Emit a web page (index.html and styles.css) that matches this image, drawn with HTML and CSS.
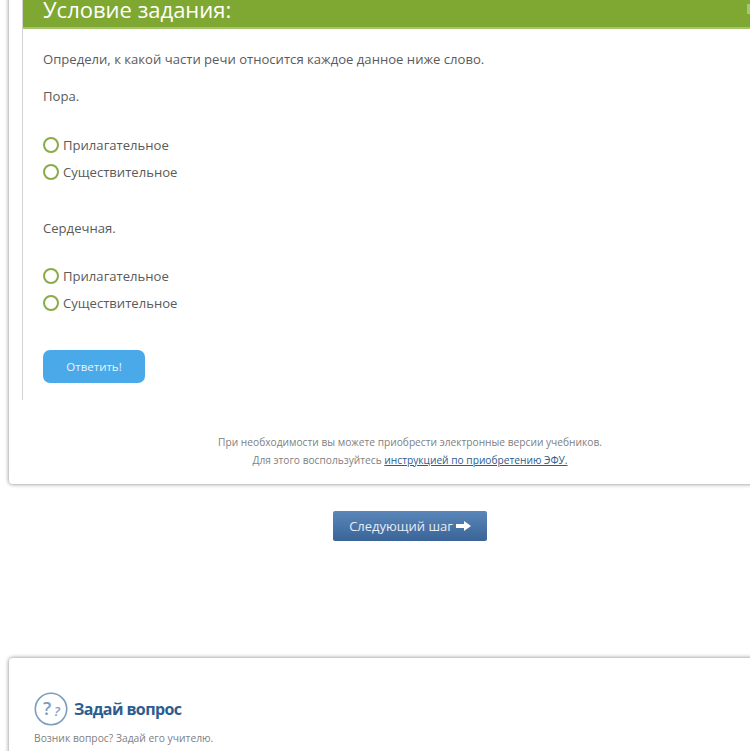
FILE: index.html
```html
<!DOCTYPE html>
<html lang="ru">
	<head>
		<meta charset="utf-8" />
		<title>Условие задания</title>
		<link rel="stylesheet" href="styles.css">
	</head>
	<body>
		<div class="page">
			<section class="card lesson">
				<div class="task">
					<h2 class="task-title">Условие задания:<span class="title-mark"></span></h2>
					<div class="task-body">
						<p class="line first">Определи, к какой части речи относится каждое данное ниже слово.</p>
						<p class="line">Пора.</p>
						<ul class="options">
							<li class="option"><span class="radio"></span>Прилагательное</li>
							<li class="option"><span class="radio"></span>Существительное</li>
						</ul>
						<p class="line">Сердечная.</p>
						<ul class="options last">
							<li class="option"><span class="radio"></span>Прилагательное</li>
							<li class="option"><span class="radio"></span>Существительное</li>
						</ul>
						<a class="answer" href="#">Ответить!</a>
					</div>
				</div>
				<div class="note">
					<p>При необходимости вы можете приобрести электронные версии учебников.</p>
					<p>Для этого воспользуйтесь <a href="#">инструкцией по приобретению ЭФУ.</a></p>
				</div>
			</section>

			<div class="next-row">
				<a class="next" href="#">Следующий шаг
					<svg class="next-arrow" width="15" height="10" viewBox="0 0 15 10"><path d="M0 3h8V0l7 5-7 5V7H0z" fill="#fff"/></svg>
				</a>
			</div>

			<section class="card ask">
				<div class="ask-head">
					<svg class="ask-icon" width="34" height="34" viewBox="0 0 34 34">
						<circle cx="17" cy="17" r="15.7" fill="none" stroke="#7d9dbd" stroke-width="1.6"/>
						<text x="9" y="23" class="q-big">?</text>
						<text x="20" y="24" class="q-small">?</text>
					</svg>
					<h3 class="ask-title">Задай вопрос</h3>
				</div>
				<p class="ask-text">Возник вопрос? Задай его учителю.</p>
			</section>
		</div>
	</body>
</html>
```

FILE: styles.css
```css
html,body {
	margin:0;
	padding:0;
	height:751px;
	overflow:hidden;
	background:#fff;
}
.page {
	width:800px;
	margin-top:-40px;
	padding-left:9px;
	font-family:"Open Sans",sans-serif;
	color:#5a5a5a;
}
.card {
	background:#fff;
	border-radius:4px;
	box-shadow:0 0 4px rgba(0,0,0,0.5);
}
.lesson {
	height:524px;
	padding-left:13px;
	box-sizing:border-box;
}
.task {
	height:440px;
	border-left:1px solid #d4d4d4;
}
.task-title {
	position:relative;
	margin:0;
	height:69px;
	padding:32px 0 0 20px;
	box-sizing:border-box;
	background:#7fa832;
	border-bottom:2px solid #a3c46a;
	color:#fff;
	font-size:22px;
	font-weight:normal;
	line-height:34px;
}
.title-mark {
	position:absolute;
	left:724px;
	top:44px;
	width:3px;
	height:10px;
	background:#a9c677;
}
.task-body {
	padding:20px 0 0 20px;
}
.line {
	margin:0 0 18px;
	font-size:13.1px;
	line-height:20px;
}
.line.first {
	margin-bottom:17px;
}
.options {
	list-style:none;
	margin:0 0 33px;
	padding:7px 0 0;
}
.options.last {
	padding-top:6px;
	margin-bottom:34px;
}
.option {
	display:flex;
	align-items:center;
	gap:4px;
	height:27px;
	font-size:13.1px;
}
.radio {
	width:16px;
	height:16px;
	box-sizing:border-box;
	border:2px solid #8aab45;
	border-radius:50%;
	background:#fff;
}
.answer {
	display:block;
	width:102px;
	height:33px;
	margin-top:1px;
	border-radius:7px;
	background:#4aa9e9;
	color:#e8f5fd;
	font-size:11.5px;
	line-height:33px;
	text-align:center;
	text-decoration:none;
}
.note {
	width:802px;
	margin-left:-13px;
	padding-top:33px;
	color:#808080;
	font-size:10.2px;
	line-height:18px;
	text-align:center;
	box-sizing:border-box;
}
.note p {
	margin:0;
}
.note a {
	color:#2d5c8f;
}
.next-row {
	padding:27px 0 0 324px;
}
.next {
	display:flex;
	align-items:center;
	justify-content:center;
	gap:3px;
	width:154px;
	height:30px;
	border-radius:2px;
	background:linear-gradient(#5a86ba,#3a6496);
	color:#e6eef7;
	font-size:13px;
	text-decoration:none;
}
.ask {
	height:140px;
	margin-top:117px;
	padding:34px 0 0 25px;
	box-sizing:border-box;
}
.ask-head {
	display:flex;
	align-items:center;
	gap:6px;
}
.q-big {
	font:600 18px "Open Sans",sans-serif;
	fill:#7d9dbd;
}
.q-small {
	font:italic 600 13px "Open Sans",sans-serif;
	fill:#7d9dbd;
}
.ask-title {
	margin:0;
	color:#2d5c8f;
	font-size:16px;
	font-weight:bold;
	letter-spacing:-0.6px;
}
.ask-text {
	margin:4px 0 0;
	color:#808080;
	font-size:10.3px;
	line-height:16px;
}
```
